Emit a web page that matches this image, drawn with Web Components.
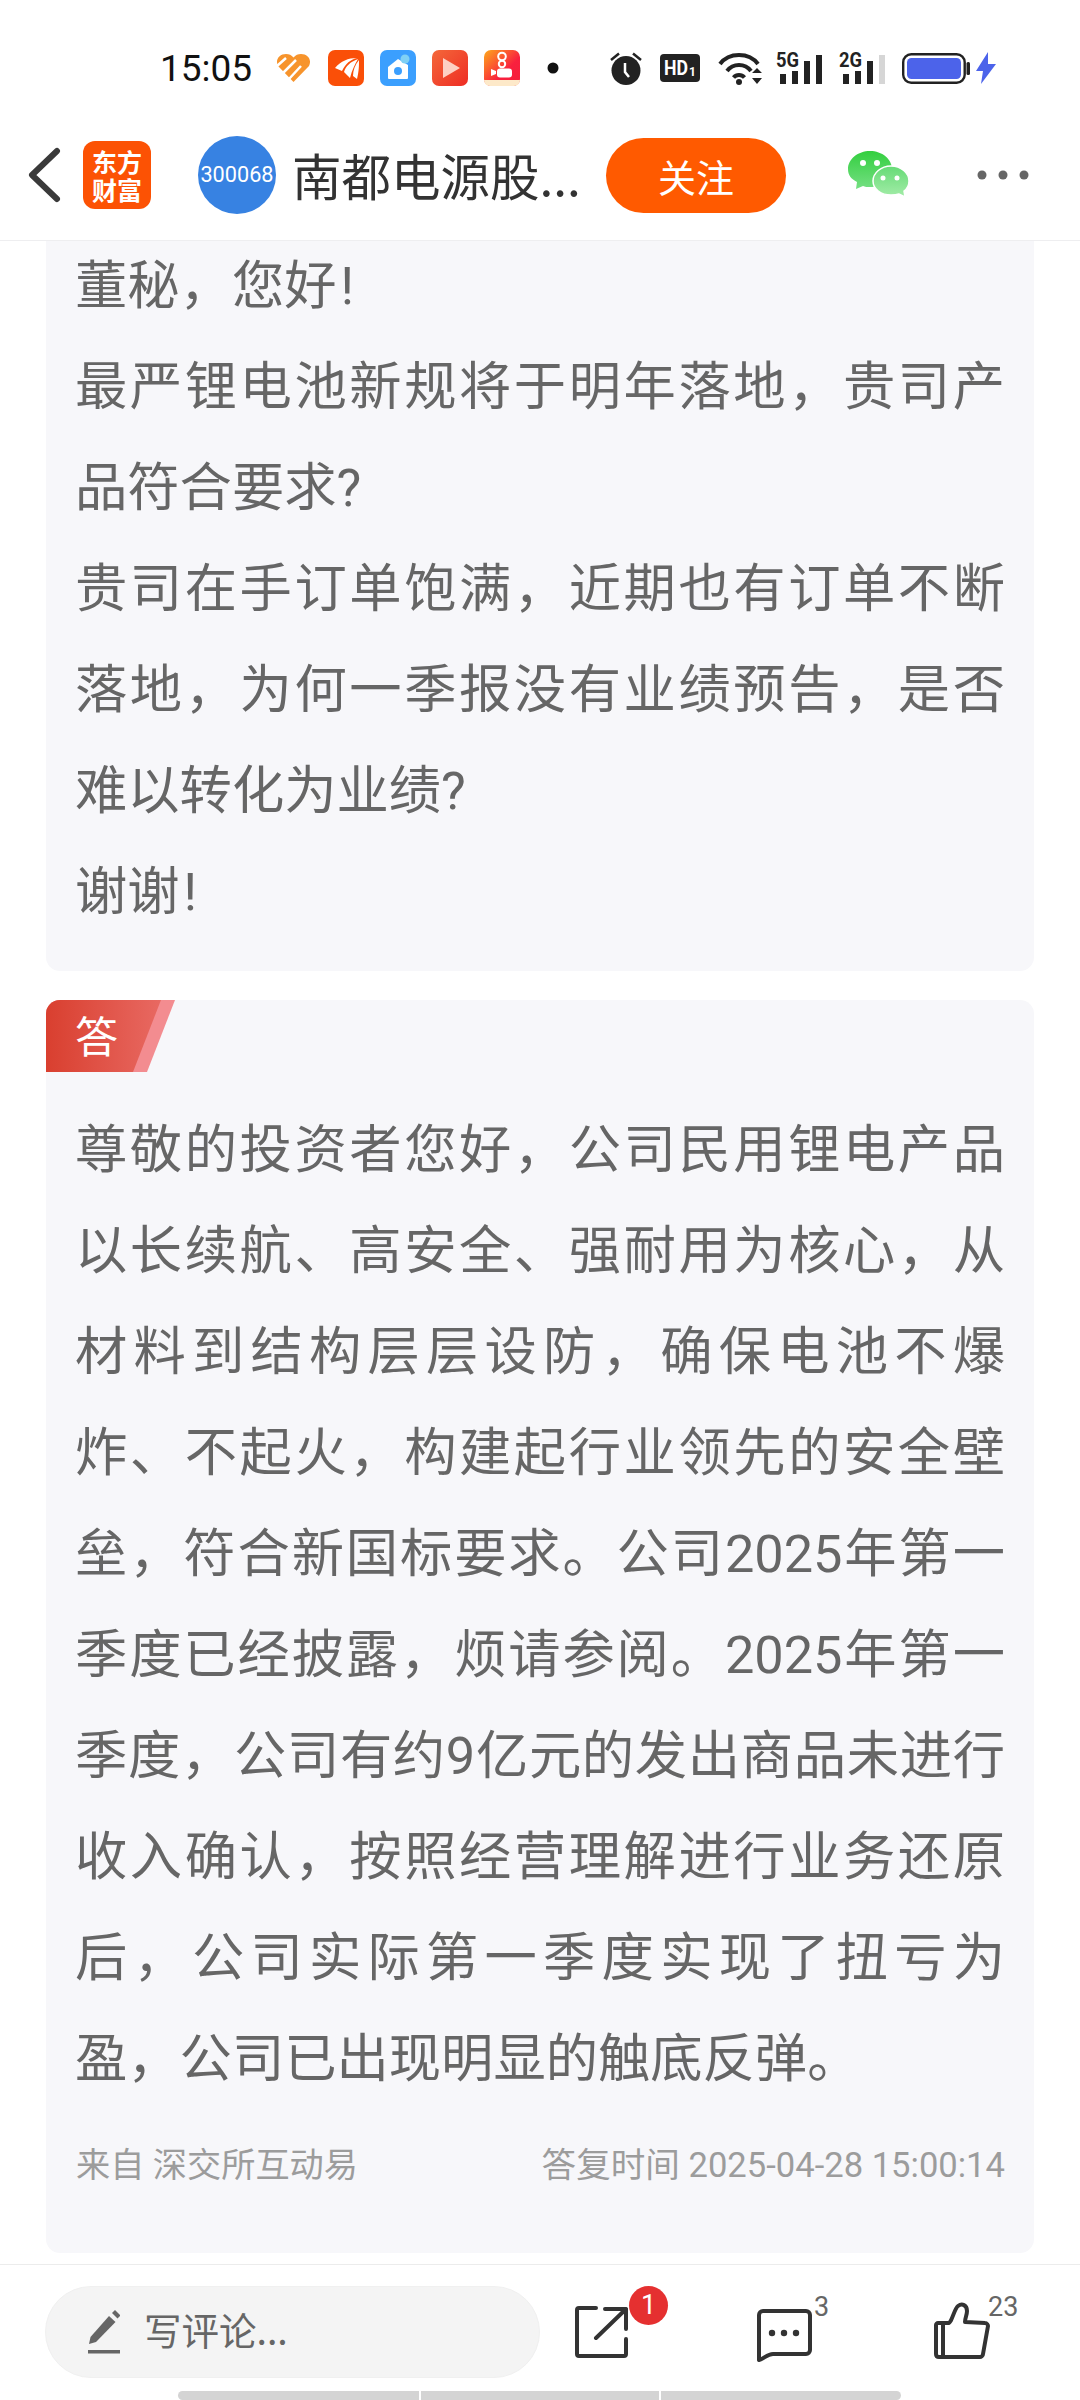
<!DOCTYPE html>
<html lang="zh">
<head>
<meta charset="utf-8">
<title>南都电源</title>
<style>
    html, body { margin: 0; background: #fff; }
    body { width: 1080px; height: 2400px; overflow: hidden; font-family: Roboto, "Noto Sans CJK SC", sans-serif; }
    #page { display: flex; flex-direction: column; height: 2400px; }
    #scroller { flex: 1; min-height: 0; overflow: hidden; display: flex; flex-direction: column; gap: 29px; }
    .mark { margin-left: 4px; }
</style>
</head>
<body>
<div id="page">
    <status-bar></status-bar>
    <app-header title-text="南都电源股..." code="300068"></app-header>
    <div id="scroller">
        <qa-card cut>
            <div>董秘，您好<span class="mark">!</span></div>
            <div>最严锂电池新规将于明年落地，贵司产品符合要求?</div>
            <div>贵司在手订单饱满，近期也有订单不断落地，为何一季报没有业绩预告，是否难以转化为业绩?</div>
            <div>谢谢<span class="mark">!</span></div>
        </qa-card>
        <qa-card label="答">
            <div>尊敬的投资者您好，公司民用锂电产品以长续航、高安全、强耐用为核心，从材料到结构层层设防，确保电池不爆炸、不起火，构建起行业领先的安全壁垒，符合新国标要求。公司2025年第一季度已经披露，烦请参阅。2025年第一季度，公司有约9亿元的发出商品未进行收入确认，按照经营理解进行业务还原后，公司实际第一季度实现了扭亏为盈，公司已出现明显的触底反弹。</div>
            <span slot="source">来自 深交所互动易</span>
            <span slot="time">答复时间 2025-04-28 15:00:14</span>
        </qa-card>
    </div>
    <bottom-bar></bottom-bar>
    <home-bar></home-bar>
</div>
<script>
class StatusBar extends HTMLElement {
    constructor() {
        super();
        this.shadow = this.attachShadow({ mode: "open" });
        this.shadow.innerHTML = /*html*/ `
            <style>
                :host { display: flex; align-items: center; height: 110px; box-sizing: border-box; padding: 26px 0 0 160px; flex: none; }
                #time { font: 400 37px/1 Roboto, sans-serif; color: #111; width: 93px; margin-right: 24px; }
                svg { display: block; flex: none; }
                .t { font-family: Roboto, sans-serif; font-weight: 700; }
                .sig { margin-top: -12px; }
            </style>
            <span id="time">15:05</span>
            <svg width="33" height="28" viewBox="0 0 33 28" style="margin-right:18px">
                <path d="M16.500 28 1 12C-2 6 2 0 9 0c3 0 5.500 1 7.500 3.500C18.500 1 21 0 24 0c7 0 11 6 8 12z" fill="#f7942c"/>
                <path d="M0 12 9 4M5 20l14-14M12 25 24 12" stroke="#fff" stroke-width="2.500" fill="none"/>
            </svg>
            <svg width="36" height="36" viewBox="0 0 36 36" style="margin-right:16px">
                <rect width="36" height="36" rx="7" fill="#fa4f08"/>
                <path d="M7 18C13 11 20 8 29 8c-7 2-11 5-15 13zM16 22c2-6 6-10 14-13-3 5-6 11-8 19zM25 26c0-6 2-11 6-16 0 6 0 11-2 19z" fill="#fff"/>
            </svg>
            <svg width="36" height="36" viewBox="0 0 36 36" style="margin-right:16px">
                <rect width="36" height="36" rx="7" fill="#3b9ffe"/>
                <path d="M8 17 18 9l10 6v13a1 1 0 0 1-1 1H9a1 1 0 0 1-1-1z" fill="#fff"/>
                <circle cx="18" cy="21" r="4" fill="#3b9ffe"/>
                <circle cx="25" cy="9" r="4.500" fill="#7fd0f5"/>
            </svg>
            <svg width="36" height="36" viewBox="0 0 36 36" style="margin-right:16px">
                <defs><linearGradient id="pl" x1="0" y1="0" x2="1" y2="1"><stop offset="0" stop-color="#f4683a"/><stop offset="1" stop-color="#ee2c24"/></linearGradient></defs>
                <rect width="36" height="36" rx="7" fill="url(#pl)"/>
                <path d="M11 8v20l17-10z" fill="#fdd0c4"/>
            </svg>
            <svg width="36" height="36" viewBox="0 0 36 36" style="margin-right:27px">
                <defs><linearGradient id="ks" x1="0" y1="0" x2="1" y2="1"><stop offset="0" stop-color="#fda91a"/><stop offset=".6" stop-color="#f9203e"/><stop offset="1" stop-color="#f5203a"/></linearGradient></defs>
                <rect width="36" height="36" rx="7" fill="url(#ks)"/>
                <circle cx="18" cy="6.500" r="3.800" fill="none" stroke="#fff" stroke-width="2"/>
                <circle cx="18" cy="14" r="3.200" fill="none" stroke="#fff" stroke-width="2"/>
                <rect x="13" y="18.500" width="15" height="9" rx="3" fill="#fff"/>
                <path d="M12 21 7 19v7l5-2z" fill="#fff"/>
                <path d="M0 30h36a6 6 0 0 1-6 6H6a6 6 0 0 1-6-6z" fill="#fde9c9"/>
            </svg>
            <svg width="12" height="12" viewBox="0 0 12 12" style="margin-right:51px"><circle cx="6" cy="6" r="5.500" fill="#111"/></svg>
            <svg width="32" height="34" viewBox="0 0 32 34" style="margin-right:18px">
                <circle cx="16" cy="19.500" r="14.500" fill="#222"/>
                <path d="M1 9 9 2.500M31 9 23 2.500" stroke="#222" stroke-width="2.500"/>
                <path d="M15 12v9l4 5" stroke="#fff" stroke-width="2.500" fill="none"/>
            </svg>
            <svg width="40" height="28" viewBox="0 0 40 28" style="margin-right:18px">
                <rect width="40" height="28" rx="4" fill="#222"/>
                <text class="t" x="4" y="21" font-size="20" fill="#fff" textLength="24" lengthAdjust="spacingAndGlyphs">HD</text>
                <text class="t" x="29" y="22" font-size="12" fill="#fff">1</text>
            </svg>
            <svg width="45" height="34" viewBox="0 0 45 34" style="margin-right:13px">
                <g fill="none" stroke="#222" stroke-width="4">
                    <path d="M2 13C11 1 31 1 40 13"/>
                    <path d="M9 20c6-8 18-8 24 0"/>
                    <path d="M15.500 26.500c3-3.500 8-3.500 11 0"/>
                </g>
                <circle cx="21" cy="31" r="3" fill="#222"/>
                <path d="M34 22h10l-5-5zM34 27h10l-5 6z" fill="#222"/>
            </svg>
            <svg class="sig" width="47" height="44" viewBox="0 -12 47 44" style="margin-right:16px">
                <text class="t" x="0" y="15" font-size="20" fill="#222" textLength="23" lengthAdjust="spacingAndGlyphs">5G</text>
                <path d="M4 22h6v10H4zM16 19h6v13h-6zM28 9h6v23h-6zM40 3h6v29h-6z" fill="#222"/>
            </svg>
            <svg class="sig" width="47" height="44" viewBox="0 -12 47 44" style="margin-right:16px">
                <text class="t" x="0" y="15" font-size="20" fill="#222" textLength="23" lengthAdjust="spacingAndGlyphs">2G</text>
                <path d="M4 22h6v10H4zM16 19h6v13h-6zM28 9h6v23h-6z" fill="#222"/>
                <path d="M40 3h6v29h-6z" fill="#d6d6d6"/>
            </svg>
            <svg width="68" height="31" viewBox="0 0 68 31" style="margin-right:6px">
                <rect x="1.200" y="1.200" width="61.500" height="28.500" rx="8" fill="#fff" stroke="#222" stroke-width="2.400"/>
                <rect x="5" y="5" width="54" height="21" rx="4.500" fill="#4c63ea"/>
                <rect x="64.500" y="9" width="3.500" height="13" rx="1.500" fill="#222"/>
            </svg>
            <svg width="20" height="32" viewBox="0 0 20 32">
                <path d="M12 0 0 19h7l-2 13 15-20h-8z" fill="#4c63ea"/>
            </svg>
        `;
    }
}
customElements.define("status-bar", StatusBar);

class AppHeader extends HTMLElement {
    constructor() {
        super();
        this.shadow = this.attachShadow({ mode: "open" });
        this.shadow.innerHTML = /*html*/ `
            <style>
                :host { display: flex; align-items: center; height: 130px; flex: none; border-bottom: 1px solid #eeeef0; position: relative; z-index: 2; background: #fff; font-family: Roboto, "Noto Sans CJK SC", sans-serif; }
                svg { display: block; flex: none; }
                #back { margin: 0 21px 0 26px; }
                #logo { width: 68px; height: 68px; border-radius: 12px; background: #fc5204; color: #fff; flex: none; margin-right: 47px; font: 700 25px/28px "Noto Sans CJK SC", sans-serif; text-align: center; display: flex; flex-direction: column; justify-content: center; }
                #avatar { width: 78px; height: 78px; border-radius: 50%; background: #3782e2; color: #fff; flex: none; margin-right: 16px; font: 400 21.700px/78px Roboto, sans-serif; text-align: center; overflow: hidden; }
                #name { width: 314px; flex: none; font: 400 49.500px/1 "Noto Sans CJK SC", sans-serif; color: #333; white-space: nowrap; }
                #follow { width: 180px; height: 75px; border-radius: 38px; background: #ff5a00; color: #fff; flex: none; font: 400 38px/75px "Noto Sans CJK SC", sans-serif; text-align: center; margin-right: 62px; }
                #more { margin-left: 67px; }
            </style>
            <svg id="back" width="36" height="56" viewBox="0 0 36 56"><path d="M31 4 6 28l25 24" fill="none" stroke="#3a3a3a" stroke-width="6" stroke-linecap="round" stroke-linejoin="round"/></svg>
            <div id="logo"><span>东方</span><span>财富</span></div>
            <div id="avatar"></div>
            <div id="name"></div>
            <div id="follow">关注</div>
            <svg width="62" height="48" viewBox="0 0 62 48">
                <defs>
                    <linearGradient id="w1" x1="0" y1="0" x2="0" y2="1"><stop offset="0" stop-color="#33cf3f"/><stop offset="1" stop-color="#75df83"/></linearGradient>
                    <linearGradient id="w2" x1="0" y1="0" x2="0" y2="1"><stop offset="0" stop-color="#66db76"/><stop offset="1" stop-color="#a3eca8"/></linearGradient>
                </defs>
                <path d="M22 0c12 0 22 8 22 18s-10 18-22 18c-3 0-5 0-7-1l-7 3 1-7C3 28 0 24 0 18 0 8 10 0 22 0z" fill="url(#w1)"/>
                <path d="M43 15c10 0 18 7 18 15 0 4-2 8-5 10l1 6-6-3c-3 1-5 1-8 1-10 0-18-6-18-14s8-15 18-15z" fill="url(#w2)" stroke="#fff" stroke-width="1.500"/>
                <circle cx="15" cy="12" r="3" fill="#fff"/><circle cx="29" cy="12" r="3" fill="#fff"/>
                <circle cx="35" cy="27" r="2.500" fill="#fff"/><circle cx="49" cy="27" r="2.500" fill="#fff"/>
            </svg>
            <svg id="more" width="52" height="10" viewBox="0 0 52 10" fill="#666"><circle cx="5" cy="5" r="4.500"/><circle cx="26" cy="5" r="4.500"/><circle cx="47" cy="5" r="4.500"/></svg>
        `;
        this.shadow.querySelector("#avatar").textContent = this.getAttribute("code");
        this.shadow.querySelector("#name").textContent = this.getAttribute("title-text");
    }
}
customElements.define("app-header", AppHeader);

class QaCard extends HTMLElement {
    constructor() {
        super();
        this.shadow = this.attachShadow({ mode: "open" });
        this.shadow.innerHTML = /*html*/ `
            <style>
                :host { display: block; margin: 0 46px; background: #f7f7fa; border-radius: 14px; flex: none; }
                :host([cut]) { border-radius: 0 0 14px 14px; padding: 0 0 28px; }
                :host([cut]) #body { margin-top: -5px; }
                #tag { display: none; width: 129px; height: 72px; position: relative; border-radius: 14px 0 0 0; overflow: hidden; }
                :host([label]) #tag { display: block; }
                #tag i { position: absolute; inset: 0; }
                #stripe { background: #f38c90; clip-path: polygon(0 0, 129px 0, 101px 72px, 0 72px); }
                #main { background: linear-gradient(90deg, #d93f2f, #ea6e68); clip-path: polygon(0 0, 115px 0, 87px 72px, 0 72px); }
                #tag span { position: absolute; left: 29px; top: 0; font: 400 43px/68px "Noto Sans CJK SC", sans-serif; color: #fff; }
                #body { padding: 0 29px 0 30px; font: 400 52.300px/101px Roboto, "Noto Sans CJK SC", sans-serif; color: #666; text-align: justify; margin-left: -1px; }
                :host([label]) #body { padding-top: 28px; }
                ::slotted(div) { text-align: justify; }
                #foot { display: none; justify-content: space-between; align-items: center; padding: 35px 29px 68px 30px; font: 400 34.600px/40px Roboto, "Noto Sans CJK SC", sans-serif; color: #9c9c9c; }
                :host([label]) #foot { display: flex; }
                ::slotted([slot="source"]) { font-size: 34.200px; }
            </style>
            <div id="tag"><i id="stripe"></i><i id="main"></i><span></span></div>
            <div id="body"><slot></slot></div>
            <div id="foot"><slot name="source"></slot><slot name="time"></slot></div>
        `;
        this.shadow.querySelector("#tag span").textContent = this.getAttribute("label") || "";
    }
}
customElements.define("qa-card", QaCard);

class BottomBar extends HTMLElement {
    constructor() {
        super();
        this.shadow = this.attachShadow({ mode: "open" });
        this.shadow.innerHTML = /*html*/ `
            <style>
                :host { display: flex; align-items: flex-start; flex: none; height: 127px; box-sizing: border-box; padding: 21px 0 0 45px; border-top: 1px solid #ececec; background: #fff; font-family: Roboto, "Noto Sans CJK SC", sans-serif; }
                svg { display: block; }
                #input { width: 495px; height: 92px; box-sizing: border-box; border: 1px solid #f0f0f0; border-radius: 46px; background: #f4f4f4; display: flex; align-items: center; gap: 24px; padding-left: 42px; color: #666; font: 400 37.500px/1 "Noto Sans CJK SC", sans-serif; flex: none; margin-right: 35px; }
                #input span { padding-bottom: 6px; }
                .act { position: relative; flex: none; }
                .num { position: absolute; font: 400 27px/1 Roboto, sans-serif; color: #666; }
                #badge { position: absolute; left: 54px; top: -20px; width: 39px; height: 39px; border-radius: 50%; background: #e53030; color: #fff; font: 400 27px/39px Roboto, sans-serif; text-align: center; }
            </style>
            <div id="input">
                <svg width="32" height="44" viewBox="0 0 32 44" fill="#666">
                    <path d="M1 34l1.500-7L21 6l6.500 6L8 32z"/>
                    <path d="M24 3l3-3 5.500 5.500-3 3z"/>
                    <rect y="40" width="32" height="3.500"/>
                </svg>
                <span>写评论...</span>
            </div>
            <div class="act" style="margin-top:20px;margin-right:129px">
                <svg width="53" height="52" viewBox="0 0 53 52" fill="none" stroke="#333" stroke-width="4" stroke-linecap="round" stroke-linejoin="round">
                    <path d="M21 2H4a2 2 0 0 0-2 2v44a2 2 0 0 0 2 2h45a2 2 0 0 0 2-2V33"/>
                    <path d="M30 3h21v20M51 3 21 32"/>
                </svg>
                <div id="badge">1</div>
            </div>
            <div class="act" style="margin-top:23px;margin-right:122px">
                <svg width="55" height="53" viewBox="0 0 55 53" fill="none" stroke="#333" stroke-width="4" stroke-linejoin="round">
                    <path d="M6 2h43a4 4 0 0 1 4 4v35a4 4 0 0 1-4 4H16c-6 0-9 5-14 6V6a4 4 0 0 1 4-4z"/>
                    <g fill="#333" stroke="none"><circle cx="15" cy="24" r="3.200"/><circle cx="27" cy="24" r="3.200"/><circle cx="39" cy="24" r="3.200"/></g>
                </svg>
                <span class="num" style="left:57px;top:-15px">3</span>
            </div>
            <div class="act" style="margin-top:16px">
                <svg width="56" height="57" viewBox="0 0 56 57" fill="none" stroke="#333" stroke-width="4" stroke-linejoin="round">
                    <path d="M9 21h5c4 0 6-14 10-17 4-3 9-1 9 5 0 4-2 7-2 11l20 1c2 0 3 2 3 3l-5 28c0 2-2 3-3 3H5c-2 0-3-1-3-3V23c0-1 1-2 2-2h5v34"/>
                </svg>
                <span class="num" style="left:54px;top:-8px">23</span>
            </div>
        `;
    }
}
customElements.define("bottom-bar", BottomBar);

class HomeBar extends HTMLElement {
    constructor() {
        super();
        this.shadow = this.attachShadow({ mode: "open" });
        this.shadow.innerHTML = /*html*/ `
            <style>
                :host { display: flex; gap: 2px; height: 9px; flex: none; padding-left: 178px; }
                i { display: block; width: 238px; background: #d4d4d4; }
                i:first-of-type { width: 241px; border-radius: 5px 0 0 5px; }
                i:last-of-type { width: 240px; border-radius: 0 5px 5px 0; }
            </style>
            <i></i><i></i><i></i>
        `;
    }
}
customElements.define("home-bar", HomeBar);
</script>
</body>
</html>
